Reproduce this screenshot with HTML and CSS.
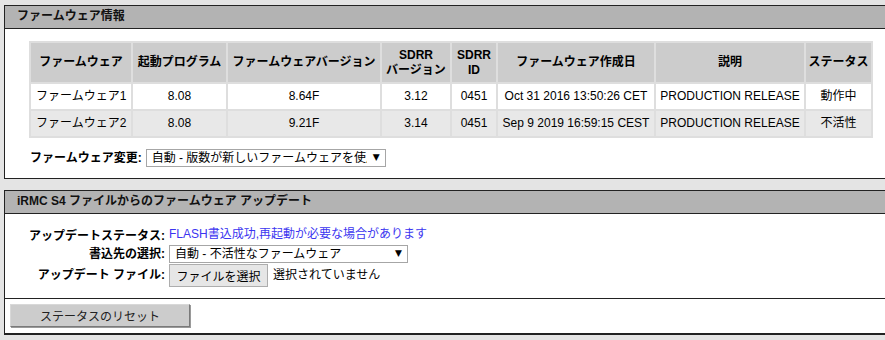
FILE: index.html
```html
<!DOCTYPE html>
<html lang="ja">
<head>
    <meta charset="UTF-8">
    <title>ファームウェア</title>
    <link rel="stylesheet" href="styles.css">
</head>
<body>
    <div class="panel">
        <div class="panel-header">ファームウェア情報</div>
        <div class="panel-body fw-body">
            <table class="fw-table">
                <colgroup>
                    <col style="width: 102px">
                    <col style="width: 95px">
                    <col style="width: 154px">
                    <col style="width: 70px">
                    <col style="width: 46px">
                    <col style="width: 158px">
                    <col style="width: 150px">
                    <col style="width: 67px">
                </colgroup>
                <thead>
                    <tr>
                        <th>ファームウェア</th>
                        <th>起動プログラム</th>
                        <th>ファームウェアバージョン</th>
                        <th>SDRR<br>バージョン</th>
                        <th>SDRR<br>ID</th>
                        <th>ファームウェア作成日</th>
                        <th>説明</th>
                        <th>ステータス</th>
                    </tr>
                </thead>
                <tbody>
                    <tr>
                        <td class="name">ファームウェア1</td>
                        <td>8.08</td>
                        <td>8.64F</td>
                        <td>3.12</td>
                        <td>0451</td>
                        <td>Oct 31 2016 13:50:26 CET</td>
                        <td>PRODUCTION RELEASE</td>
                        <td>動作中</td>
                    </tr>
                    <tr class="alt">
                        <td class="name">ファームウェア2</td>
                        <td>8.08</td>
                        <td>9.21F</td>
                        <td>3.14</td>
                        <td>0451</td>
                        <td>Sep 9 2019 16:59:15 CEST</td>
                        <td>PRODUCTION RELEASE</td>
                        <td>不活性</td>
                    </tr>
                </tbody>
            </table>
            <div class="fw-change">
                <label class="label">ファームウェア変更:</label>
                <span class="select-wrap select-short">
                    <select>
                        <option>自動 - 版数が新しいファームウェアを使用</option>
                    </select>
                </span>
            </div>
        </div>
    </div>

    <div class="panel">
        <div class="panel-header">iRMC S4 ファイルからのファームウェア アップデート</div>
        <div class="panel-body update-body">
            <div class="form-grid">
                <span class="label">アップデートステータス:</span>
                <span class="status-text">FLASH書込成功,再起動が必要な場合があります</span>

                <span class="label">書込先の選択:</span>
                <span class="select-wrap select-long">
                    <select>
                        <option>自動 - 不活性なファームウェア</option>
                    </select>
                </span>

                <span class="label">アップデート ファイル:</span>
                <span class="file-row">
                    <button class="file-btn">ファイルを選択</button>
                    <span>選択されていません</span>
                </span>
            </div>
        </div>
        <div class="panel-footer">
            <button class="reset-btn">ステータスのリセット</button>
        </div>
    </div>
</body>
</html>
```

FILE: styles.css
```css
* {
    box-sizing: border-box;
}

body {
    margin: 0;
    padding: 5px 0 0 4px;
    background: #e4e4e4;
    font-family: "Liberation Sans", "Noto Sans CJK JP", sans-serif;
    font-size: 12px;
    line-height: 15px;
    color: #000;
    overflow: hidden;
}

.panel {
    border: 1px solid #222;
    border-right: none;
    background: #fff;
    margin-right: -10px;
    margin-bottom: 11px;
}

.panel-header {
    background: #b3b3b3;
    border-bottom: 1px solid #222;
    height: 23px;
    padding: 3px 0 0 12px;
    font-weight: bold;
    color: #111;
}

.fw-body {
    padding: 12px 0 11px 24px;
}

.fw-table {
    border-collapse: collapse;
    table-layout: fixed;
    width: 842px;
}

.fw-table th,
.fw-table td {
    border: 2px solid #dedede;
    text-align: center;
    padding: 0 2px;
    white-space: nowrap;
}

.fw-table th {
    background: #cccccc;
    height: 41px;
    font-weight: bold;
}

.fw-table td {
    height: 27px;
    background: #fff;
}

.fw-table tr.alt td {
    background: #e8e8e8;
}

.fw-table td.name {
    text-align: left;
    padding-left: 5px;
}

.fw-change {
    display: flex;
    align-items: center;
    gap: 4px;
    margin: 11px 0 0 1px;
}

.label {
    font-weight: bold;
}

.select-wrap {
    position: relative;
    display: inline-block;
    height: 18px;
}

.select-wrap select {
    appearance: none;
    -webkit-appearance: none;
    width: 100%;
    height: 18px;
    border: 1px solid #a6a6a6;
    background: #fff;
    font-family: inherit;
    font-size: 12px;
    line-height: 16px;
    padding: 0 18px 0 5px;
    color: #000;
    border-radius: 0;
    outline: none;
}

.select-wrap::after {
    content: "▼";
    position: absolute;
    right: 6px;
    top: 3px;
    font-family: "DejaVu Sans", sans-serif;
    font-size: 9px;
    line-height: 11px;
    pointer-events: none;
}

.select-short {
    width: 240px;
}

.select-long {
    width: 239px;
}

.update-body {
    padding: 13px 0 11px 0;
}

.form-grid {
    display: grid;
    grid-template-columns: 160px auto;
    column-gap: 4px;
    align-items: center;
}

.form-grid .label {
    text-align: right;
}

.status-text {
    color: #3b35f0;
    height: 18px;
    line-height: 15px;
}

.file-row {
    display: flex;
    align-items: center;
    gap: 5px;
    height: 24px;
}

.file-btn {
    font-family: inherit;
    font-size: 12px;
    width: 99px;
    height: 23px;
    background: #e6e6e6;
    border: 1px solid #adadad;
    border-radius: 0;
    padding: 0;
    color: #000;
}

.panel-footer {
    border-top: 1px solid #222;
    border-bottom: 1px solid #222;
    padding: 5px 0 6px 5px;
    background: #fff;
}

.reset-btn {
    width: 180px;
    height: 23px;
    background: #cccccc;
    border: 1px solid #d8d8d8;
    border-right-color: #7a7a7a;
    border-bottom-color: #7a7a7a;
    box-shadow: 1px 1px 0 #9a9a9a;
    font-family: inherit;
    font-size: 12px;
    color: #222;
    padding: 0;
}
```
